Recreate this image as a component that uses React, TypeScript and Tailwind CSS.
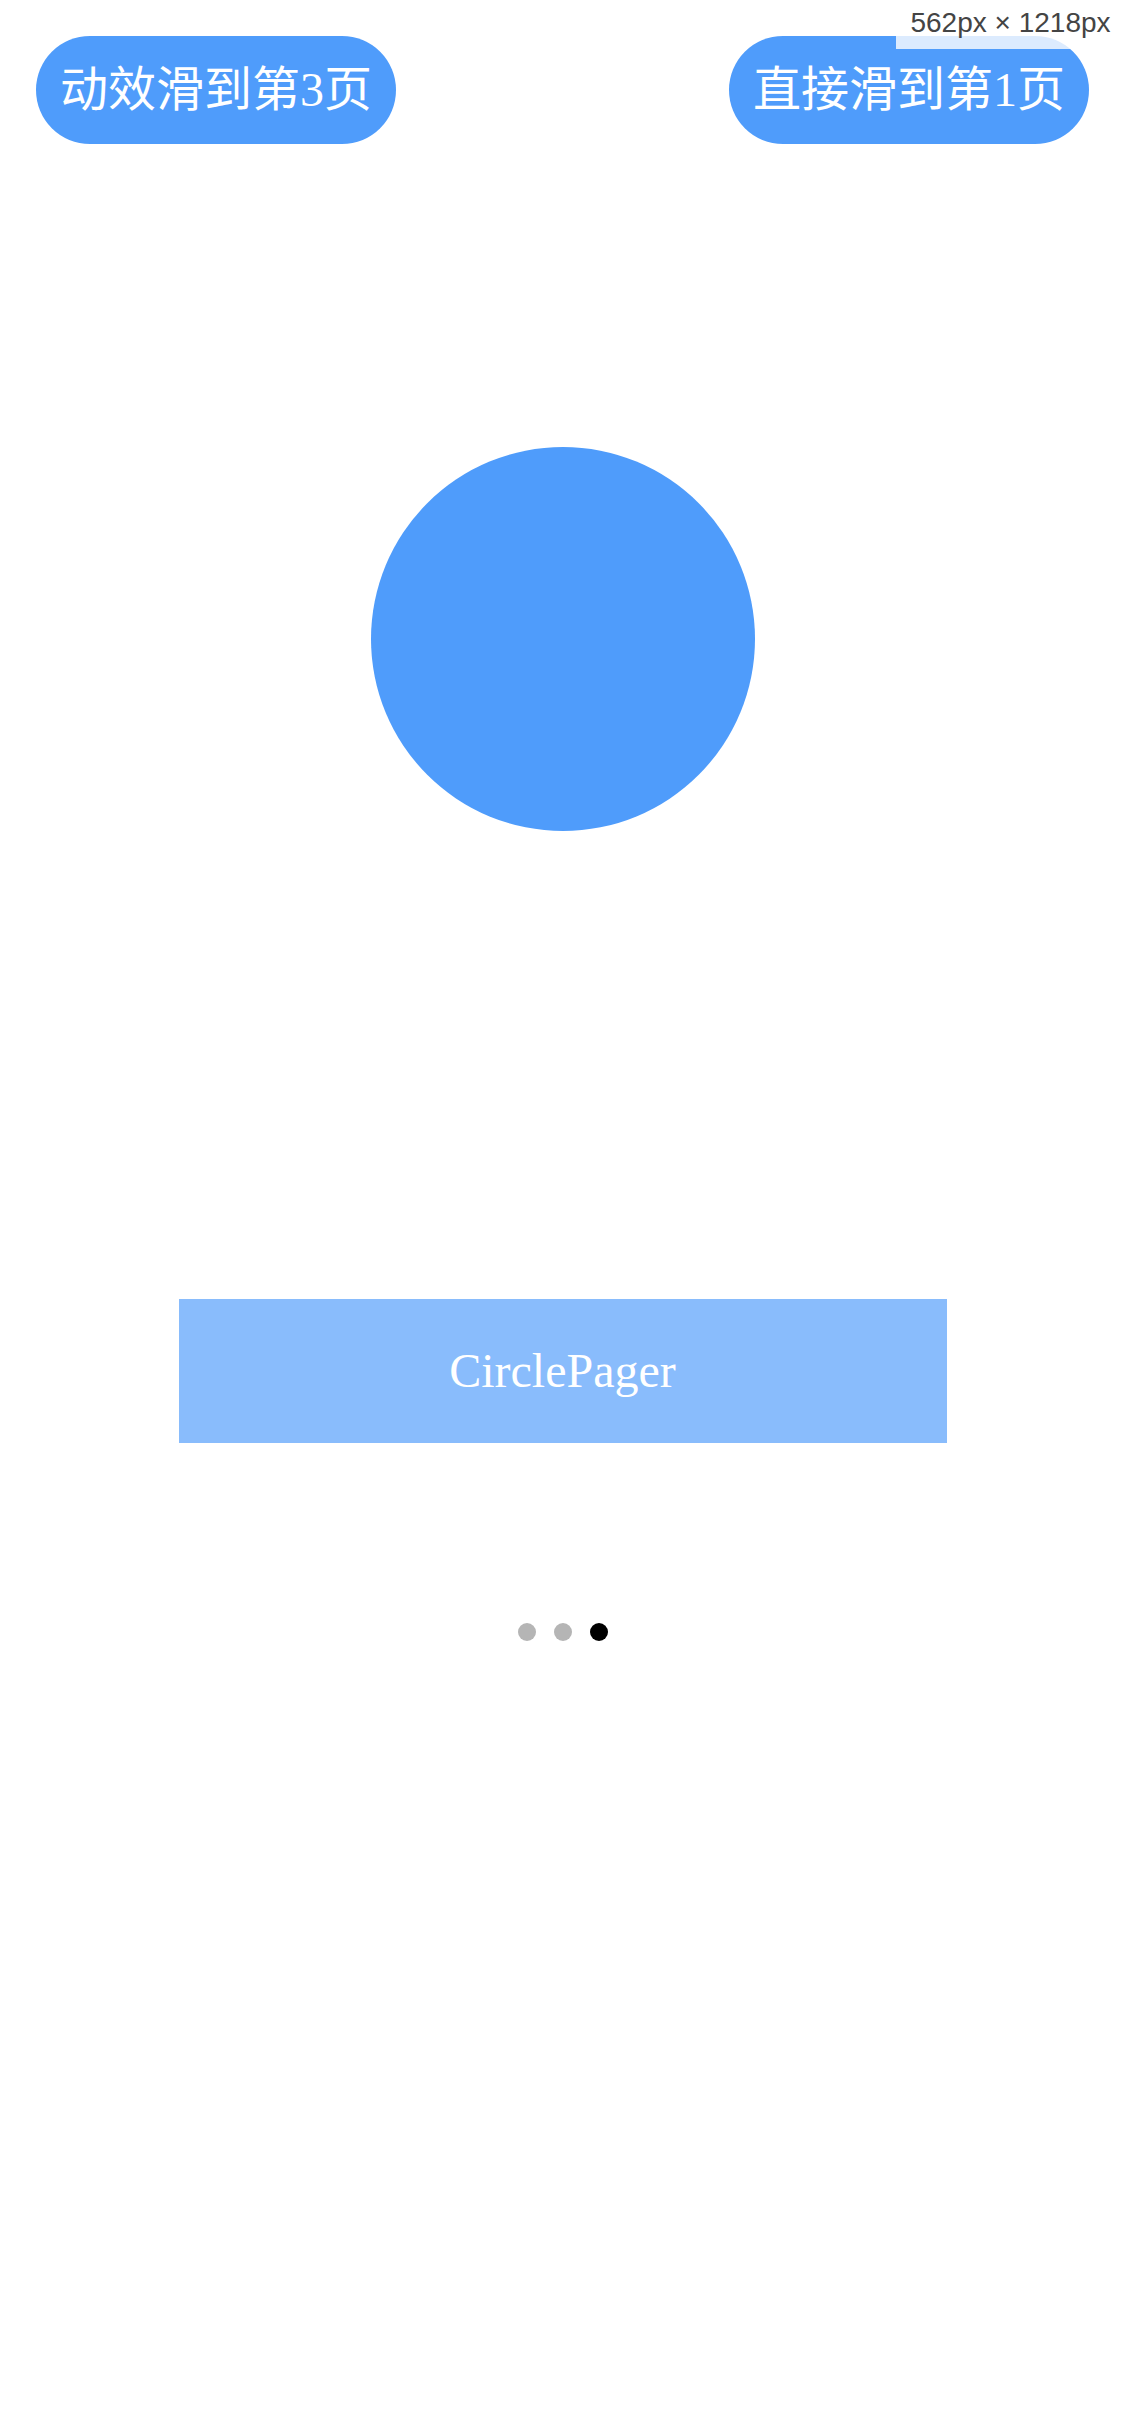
export default function App(): JSX.Element {
  const pages = [0, 1, 2]
  const current = 2

  return (
    <div className="relative min-h-[2436px] w-full bg-white">
      {/* size overlay from the capture tool */}
      <div className="absolute right-0 top-0 flex h-[49px] w-[229px] items-start justify-center bg-white/80 pt-[7px] font-['Liberation_Sans',sans-serif] text-[28px] leading-[32px] text-[#444444]">
        562px × 1218px
      </div>

      {/* Top buttons */}
      <div className="flex justify-between px-[36px] pt-[36px]">
        <button className="flex h-[108px] w-[360px] items-center justify-center rounded-full bg-[#4f9cfb] font-['Liberation_Serif','Noto_Sans_CJK_SC',serif] text-[48px] leading-none text-white">
          动效滑到第3页
        </button>
        <button className="flex h-[108px] w-[360px] items-center justify-center rounded-full bg-[#4f9cfb] font-['Liberation_Serif','Noto_Sans_CJK_SC',serif] text-[48px] leading-none text-white">
          直接滑到第1页
        </button>
      </div>

      {/* Circle */}
      <div className="mt-[303px] flex justify-center">
        <div className="h-[384px] w-[384px] rounded-full bg-[#4f9cfb]"></div>
      </div>

      {/* Pager label */}
      <div className="mt-[468px] flex justify-center">
        <div className="flex h-[144px] w-[768px] items-center justify-center bg-[#89bcfc] font-['Liberation_Serif',serif] text-[48px] text-white">
          CirclePager
        </div>
      </div>

      {/* Indicator dots */}
      <div className="mt-[180px] flex justify-center gap-[18px]">
        {pages.map((p) => (
          <div
            key={p}
            className={`h-[18px] w-[18px] rounded-full ${p === current ? 'bg-black' : 'bg-[#b5b5b5]'}`}
          ></div>
        ))}
      </div>
    </div>
  )
}
